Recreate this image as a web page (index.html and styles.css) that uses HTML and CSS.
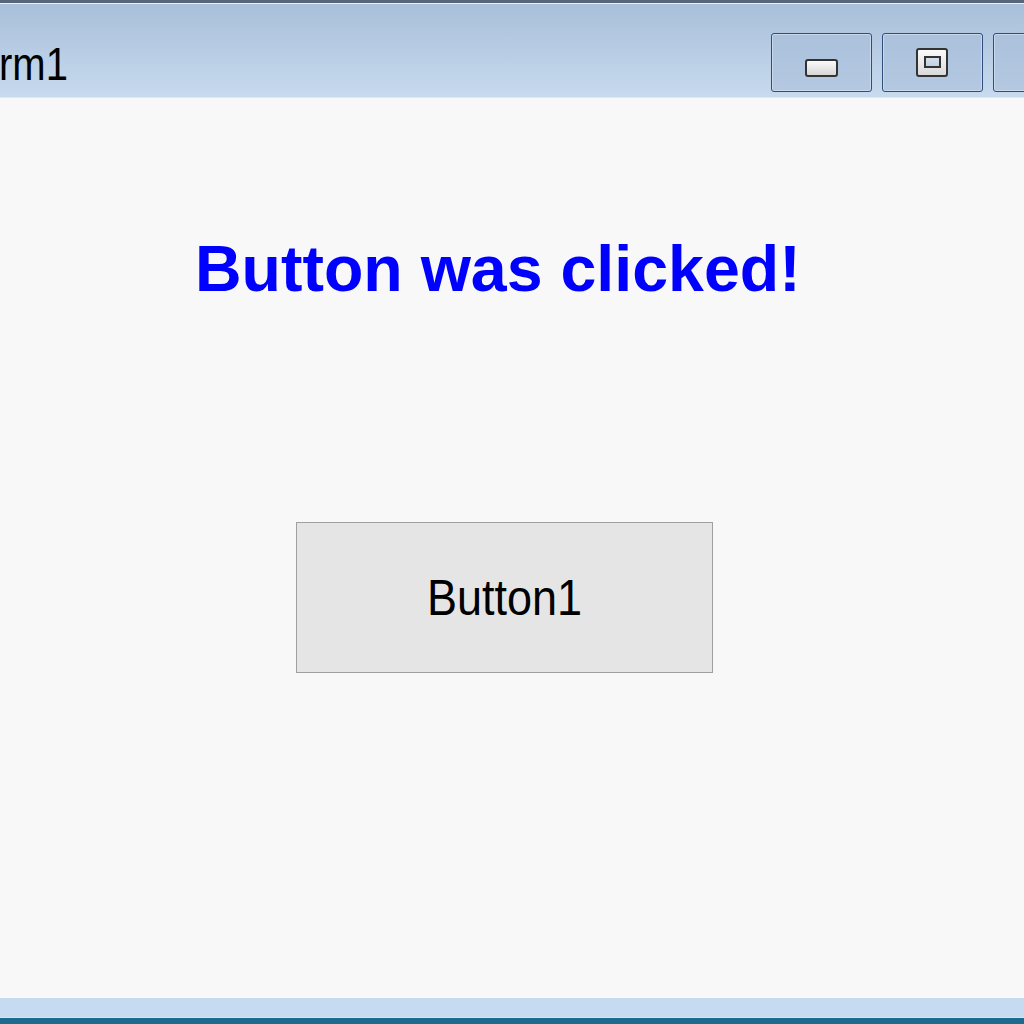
FILE: index.html
```html
<!DOCTYPE html>
<html>
<head>
<meta charset="utf-8">
<link rel="stylesheet" href="styles.css">
</head>
<body>
<div class="window">
  <div class="titlebar">
    <div class="title"><span class="title-text">rm1</span></div>
    <div class="controls">
      <div class="cbtn"><span class="ico-min"></span></div>
      <div class="cbtn"><span class="ico-max"><span class="ico-max-in"></span></span></div>
      <div class="cbtn cbtn-close"></div>
    </div>
  </div>
  <div class="client">
    <div class="label">Button was clicked!</div>
    <button class="button1"><span class="button1-text">Button1</span></button>
  </div>
  <div class="bottom-frame"></div>
</div>
</body>
</html>
```
FILE: styles.css
```css
html, body {
  margin: 0;
  padding: 0;
  width: 1024px;
  height: 1024px;
  overflow: hidden;
  background: #f8f8f8;
}
.window {
  width: 1024px;
  height: 1024px;
  display: flex;
  flex-direction: column;
  font-family: "Liberation Sans", Arial, sans-serif;
}
.titlebar {
  height: 94px;
  border-top: 3px solid #56657a;
  box-shadow: inset 0 1px 0 #e9f0f8;
  background: linear-gradient(#a8bfda, #c7daee);
  border-bottom: 1px solid #dfe9f4;
  display: flex;
  align-items: flex-start;
  overflow: hidden;
}
.title {
  margin-left: -1px;
  margin-top: 38px;
  flex: 1;
}
.title-text {
  display: inline-block;
  font-size: 40px;
  line-height: 46px;
  color: #000;
  transform: scaleY(1.15);
  transform-origin: 50% 50%;
}
.controls {
  display: flex;
  gap: 10px;
  margin-top: 30px;
  margin-right: -70px;
}
.cbtn {
  width: 99px;
  height: 57px;
  border: 1px solid #2f4e7c;
  border-radius: 3px;
  box-shadow: inset 0 0 0 1px #c9d9ec;
  background: linear-gradient(#abc1dc, #b4c8e1);
  display: flex;
  align-items: flex-start;
  justify-content: center;
  flex: none;
}
.ico-min {
  box-sizing: border-box;
  width: 33px;
  height: 18px;
  margin-top: 25px;
  margin-left: -1px;
  border: 2px solid #333;
  border-radius: 3px;
  background: linear-gradient(#fbfbfb, #d6d6d6);
}
.ico-max {
  box-sizing: border-box;
  width: 32px;
  height: 29px;
  margin-top: 14px;
  margin-right: 1px;
  border: 2px solid #333;
  border-radius: 3px;
  background: linear-gradient(#fbfbfb, #d9d9d9);
  display: flex;
  align-items: flex-start;
  justify-content: center;
}
.ico-max-in {
  box-sizing: border-box;
  width: 17px;
  height: 12px;
  margin-top: 6px;
  border: 2px solid #333;
  background: linear-gradient(#d6e0ec, #c2d0e2);
}
.client {
  flex: 1;
  background: #f8f8f8;
  display: flex;
  flex-direction: column;
  align-items: flex-start;
}
.label {
  margin-left: 195px;
  margin-top: 135px;
  font-size: 64.5px;
  line-height: 72px;
  font-weight: bold;
  color: #0000ff;
}
.button1 {
  margin-left: 296px;
  margin-top: 217px;
  width: 417px;
  height: 151px;
  border: 1px solid #a0a0a0;
  background: #e5e5e5;
  font-family: "Liberation Sans", Arial, sans-serif;
  color: #000;
  padding: 0;
}
.button1-text {
  display: inline-block;
  font-size: 45px;
  line-height: 52px;
  transform: scaleY(1.12);
}
.bottom-frame {
  height: 20px;
  border-top: 1px solid #fbfbf2;
  background: #c6dbf2;
  border-bottom: 6px solid #1b6b90;
  box-shadow: inset 0 -1px 0 #d6e5f5;
}
```
